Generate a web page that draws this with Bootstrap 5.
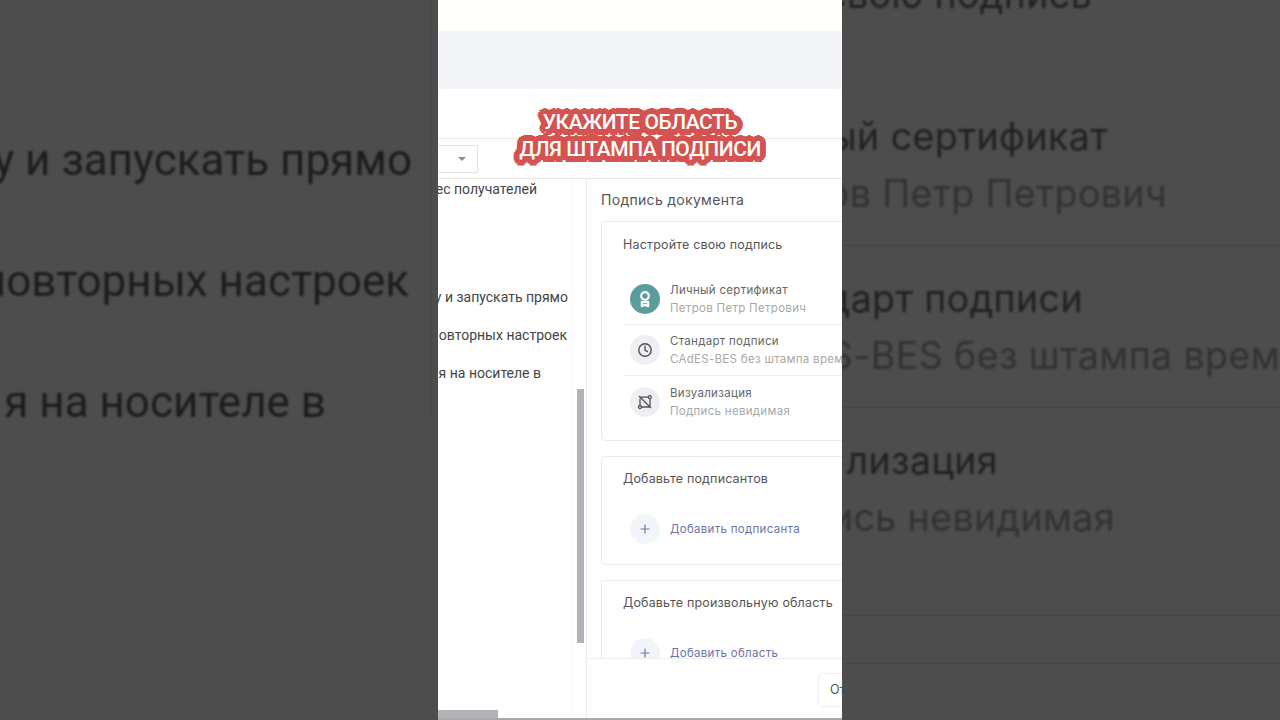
<!DOCTYPE html>
<html lang="ru">
<head>
<meta charset="utf-8">
<title>Подпись документа</title>
<link href="https://cdn.jsdelivr.net/npm/bootstrap@5.3.0/dist/css/bootstrap.min.css" rel="stylesheet">
<style>
html,body{margin:0;background:#4d4d4d;overflow:hidden}
.stage{width:1280px;height:720px;overflow:hidden;position:relative}
.side{width:438px;flex:none;height:720px;overflow:hidden;background:#4d4d4d}
.lbox{padding-top:100px;border-right:1px solid #484848;height:420px;margin-right:6px;margin-left:-6px}
.lrow{font:44px/121px Roboto,"Liberation Sans",sans-serif;color:#1c1c1c;white-space:nowrap;display:flex;justify-content:flex-end;height:121px;filter:blur(.9px)}
.lp1{padding-right:19px}.lp2{padding-right:22px}.lp3{padding-right:105px}
.rrow{font:37.500px/57px Inter,sans-serif;letter-spacing:.4px;color:#212121;white-space:nowrap;display:flex;justify-content:flex-end;height:57px;filter:blur(.9px)}
.rrow.dim{color:#323232}
.rline{height:1px;background:#464646}
.r0{margin-top:-34px;padding-right:188px}
.r1{margin-top:84.500px;padding-right:172px}
.r2{padding-right:113px}
.r3{margin-top:24px;padding-right:197px}
.r5{margin-top:24px;padding-right:282px}
.r6{padding-right:165px}
.m23{margin-top:23px}.m69{margin-top:69px}.m47{margin-top:47px}
.phone{width:404px;flex:none;height:720px;background:#fff;display:flex;flex-direction:column;overflow:hidden;border-bottom:2px solid #a9a9a9}
.tstrip{height:31px;background:#fffffb;flex:none}
.tband{height:58px;background:#f3f5f8;flex:none}
.thead{height:50px;flex:none;border-bottom:1px solid #e8e8e8}
.ttool{height:40px;flex:none;border-bottom:1px solid #e4e4e4;padding-top:6px}
.pick{width:40px;height:28px;border:1px solid #e4e4e4;border-left:0;display:flex;align-items:center;justify-content:flex-end;padding-right:11px}
.caret{width:0;height:0;border-left:4px solid transparent;border-right:4px solid transparent;border-top:4px solid #8d8d8d}
.workarea{flex:1;min-height:0;display:flex}
.lpane{width:149px;flex:none;border-right:1px solid #ececec;display:flex;flex-direction:column}
.lbody{flex:1;display:flex;min-height:0}
.ltext{width:135px;flex:none;overflow:hidden;border-right:1px solid #f6f6f6;font:14px/20px Roboto,"Liberation Sans",sans-serif;color:#454545}
.ltxt{display:flex;justify-content:flex-end;white-space:nowrap;height:20px;margin-bottom:18px}
.l0{padding-right:35px;margin-bottom:88px}.l1{padding-right:4px}.l2{padding-right:5px}.l3{padding-right:31px}
.vgut{flex:1;padding:210px 3px 0 3px}
.vbar{height:254px;width:7px;background:#b2b2b8;margin-left:1px}
.hbar{height:8px;width:60px;background:#b2b2b8;flex:none}
.rpane{flex:1;min-width:0;display:flex;flex-direction:column;font-family:Inter,sans-serif}
.rscroll{flex:1;min-height:0;overflow:hidden;padding:11px 0 0 14px}
.ptitle{font-size:14px;line-height:20px;color:#555;letter-spacing:.3px;margin-bottom:11px}
.sheet{width:300px;border:1px solid #ebebeb;border-radius:4px;padding:12px 0 0 21px;margin-bottom:15px;background:#fff}
.sheet-a{height:220px;padding-top:13px}.sheet-b{height:109px}
.sheet-c{height:150px}
.stitle{font-size:12.500px;line-height:20px;color:#555;letter-spacing:.17px}
.rowlist{margin-top:18.400px}
.ritem{height:51.400px;display:flex;align-items:center;gap:10px;padding-left:7px;border-bottom:1px solid #eee}
.ritem:last-child{border-bottom:0}
.ring{width:30px;height:30px;border-radius:50%;background:#efeff3;display:flex;align-items:center;justify-content:center;flex:none;color:#505058}
.ring-t{background:#5b9c9c;color:#fff}
.ring-p{background:#f2f5fa;color:#6e78ae}
.it1{font-size:11.500px;line-height:18px;color:#666;letter-spacing:.3px;white-space:nowrap}
.it2{font-size:11.500px;line-height:18px;color:#a8a8a8;letter-spacing:.3px;white-space:nowrap}
.addrow{display:flex;align-items:center;gap:10px;padding-left:7px;margin-top:25px}
.addtxt{font-size:11.500px;color:#6c74a8;letter-spacing:.3px;white-space:nowrap;padding-top:1px}
.rfoot{height:60px;flex:none;border-top:1px solid #eee;padding:14px 0 0 231px;background:#fff}
.fbtn{width:100px;height:34px;border:1px solid #eee;border-radius:5px;font-size:12.500px;color:#555;padding:0 0 0 11px;line-height:32px;white-space:nowrap}
.cap{position:absolute;left:438px;top:109px;width:404px;display:flex;flex-direction:column;align-items:center;font:500 21px/27px Roboto,"Liberation Sans",sans-serif;color:#fff;z-index:2;letter-spacing:-.45px;
text-shadow:6px 0 0 #d4524f,-6px 0 0 #d4524f,0 6px 0 #d4524f,0 -6px 0 #d4524f,4.200px 4.200px 0 #d4524f,-4.200px 4.200px 0 #d4524f,4.200px -4.200px 0 #d4524f,-4.200px -4.200px 0 #d4524f,5.500px 2.300px 0 #d4524f,-5.500px 2.300px 0 #d4524f,5.500px -2.300px 0 #d4524f,-5.500px -2.300px 0 #d4524f,2.300px 5.500px 0 #d4524f,-2.300px 5.500px 0 #d4524f,2.300px -5.500px 0 #d4524f,-2.300px -5.500px 0 #d4524f,3px 0 0 #d4524f,-3px 0 0 #d4524f,0 3px 0 #d4524f,0 -3px 0 #d4524f,2px 2px 0 #d4524f,-2px 2px 0 #d4524f,2px -2px 0 #d4524f,-2px -2px 0 #d4524f}
.cap1,.cap2{white-space:nowrap}
</style>
</head>
<body>
<div class="stage d-flex">
  <div class="side">
    <div class="lbox">
      <div class="lrow lp1"><span>у и запускать прямо</span></div>
      <div class="lrow lp2"><span>повторных настроек</span></div>
      <div class="lrow lp3"><span>я на носителе в</span></div>
    </div>
  </div>
  <div class="phone">
    <div class="tstrip"></div>
    <div class="tband"></div>
    <div class="thead"></div>
    <div class="ttool"><div class="pick"><span class="caret"></span></div></div>
    <div class="workarea">
      <div class="lpane">
        <div class="lbody">
          <div class="ltext">
            <div class="ltxt l0"><span>ес получателей</span></div>
            <div class="ltxt l1"><span>у и запускать прямо</span></div>
            <div class="ltxt l2"><span>овторных настроек</span></div>
            <div class="ltxt l3"><span>я на носителе в</span></div>
          </div>
          <div class="vgut"><div class="vbar"></div></div>
        </div>
        <div class="hbar"></div>
      </div>
      <div class="rpane">
        <div class="rscroll">
          <div class="ptitle">Подпись документа</div>
          <div class="sheet sheet-a">
            <div class="stitle">Настройте свою подпись</div>
            <div class="rowlist">
              <div class="ritem">
                <span class="ring ring-t"><svg width="16" height="18" viewBox="0 0 16 18" fill="none" stroke="currentColor" stroke-width="2.200"><circle cx="8" cy="6" r="3.800"/><path d="M3.800 12.200h8.400M4.800 12.200v4l2-1h2.400l2 1v-4" stroke-linejoin="round"/></svg></span>
                <div><div class="it1">Личный сертификат</div><div class="it2">Петров Петр Петрович</div></div>
              </div>
              <div class="ritem">
                <span class="ring"><svg width="16" height="16" viewBox="0 0 16 16" fill="none" stroke="currentColor" stroke-width="1.400"><circle cx="8" cy="8" r="6.200"/><path d="M8 4.200V8.200l2.400 1.400" stroke-linecap="round"/></svg></span>
                <div><div class="it1">Стандарт подписи</div><div class="it2">CAdES-BES без штампа врем</div></div>
              </div>
              <div class="ritem">
                <span class="ring"><svg width="16" height="16" viewBox="0 0 16 16" fill="none" stroke="currentColor" stroke-width="1.300"><path d="M2 2l12 12M2.500 3.200h8.500M13 5v8.500M3 4.500v7M5 13h8"/><circle cx="12.800" cy="3.200" r="1.500"/><circle cx="3" cy="13" r="1.500"/></svg></span>
                <div><div class="it1">Визуализация</div><div class="it2">Подпись невидимая</div></div>
              </div>
            </div>
          </div>
          <div class="sheet sheet-b">
            <div class="stitle">Добавьте подписантов</div>
            <div class="addrow"><span class="ring ring-p"><svg width="10" height="10" viewBox="0 0 10 10" stroke="currentColor" stroke-width="1.200"><path d="M5 .5v9M.5 5h9"/></svg></span><span class="addtxt">Добавить подписанта</span></div>
          </div>
          <div class="sheet sheet-c">
            <div class="stitle">Добавьте произвольную область</div>
            <div class="addrow"><span class="ring ring-p"><svg width="10" height="10" viewBox="0 0 10 10" stroke="currentColor" stroke-width="1.200"><path d="M5 .5v9M.5 5h9"/></svg></span><span class="addtxt">Добавить область</span></div>
          </div>
        </div>
        <div class="rfoot"><div class="fbtn">От</div></div>
      </div>
    </div>
  </div>
  <div class="side">
    <div class="rrow r0"><span>свою подпись</span></div>
    <div class="rrow r1"><span>ый сертификат</span></div>
    <div class="rrow dim r2"><span>ов Петр Петрович</span></div>
    <div class="rline m23"></div>
    <div class="rrow r3"><span>дарт подписи</span></div>
    <div class="rrow dim"><span>S-BES без штампа врем</span></div>
    <div class="rline m23"></div>
    <div class="rrow r5"><span>лизация</span></div>
    <div class="rrow dim r6"><span>ись невидимая</span></div>
    <div class="rline m69"></div>
    <div class="rline m47"></div>
  </div>
  <div class="cap">
    <span class="cap1">УКАЖИТЕ ОБЛАСТЬ</span>
    <span class="cap2">ДЛЯ ШТАМПА ПОДПИСИ</span>
  </div>
</div>
<script src="https://cdn.jsdelivr.net/npm/bootstrap@5.3.0/dist/js/bootstrap.bundle.min.js"></script>
</body>
</html>
